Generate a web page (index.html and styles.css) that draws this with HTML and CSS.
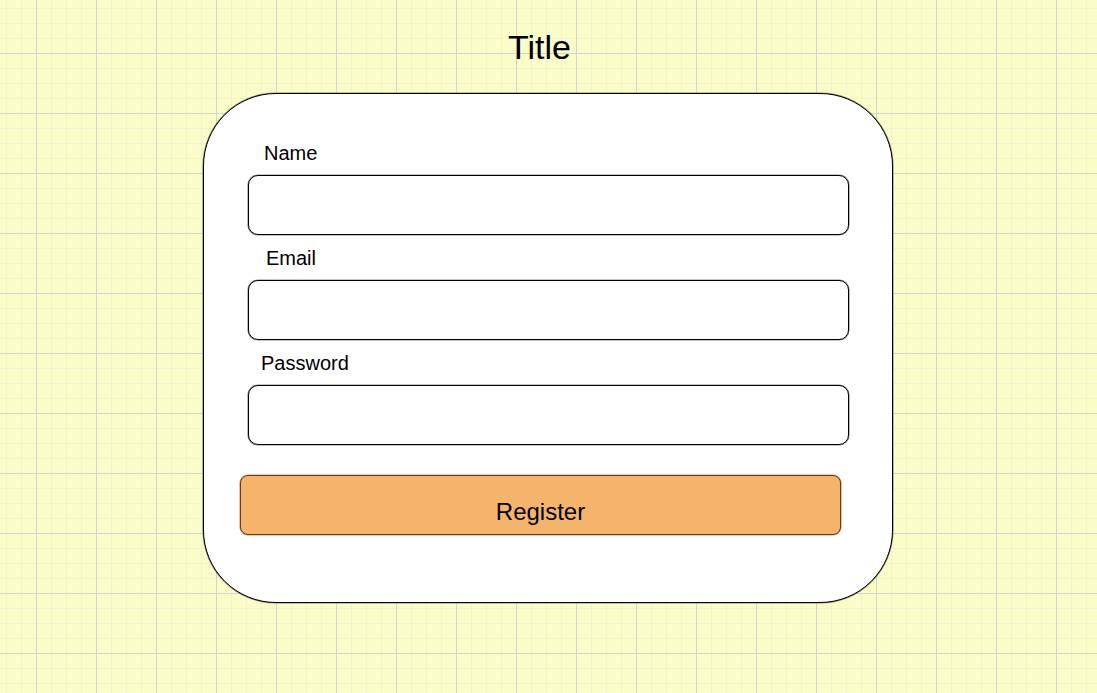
FILE: index.html
```html
<!DOCTYPE html>
<html lang="en">
<head>
<meta charset="utf-8">
<title>Register</title>
<link rel="stylesheet" href="styles.css">
</head>
<body>
<main class="page">
  <h1 class="title">Title</h1>
  <form class="card">
    <div class="field">
      <label class="label label-name" for="name">Name</label>
      <input class="input" id="name" type="text">
    </div>
    <div class="field">
      <label class="label label-email" for="email">Email</label>
      <input class="input" id="email" type="email">
    </div>
    <div class="field">
      <label class="label label-password" for="password">Password</label>
      <input class="input" id="password" type="password">
    </div>
    <button class="register" type="button">Register</button>
  </form>
</main>
</body>
</html>
```

FILE: styles.css
```css
html, body {
  margin: 0;
  padding: 0;
}

body {
  width: 1097px;
  height: 693px;
  overflow: hidden;
  font-family: "Liberation Sans", Arial, sans-serif;
  color: #000;
  background-color: #fbfdc9;
  background-image:
    linear-gradient(to right, #d5d5cf 1px, transparent 1px),
    linear-gradient(to bottom, #d5d5cf 1px, transparent 1px),
    linear-gradient(to right, #f2f3cd 1px, transparent 1px),
    linear-gradient(to bottom, #f2f3cd 1px, transparent 1px);
  background-size: 60px 60px, 60px 60px, 15px 15px, 15px 15px;
  background-position: 36px 53px, 36px 53px, 6px 8px, 6px 8px;
}

.page {
  display: flex;
  flex-direction: column;
  margin-left: 203px;
  width: 690px;
  padding-top: 27px;
}

.title {
  margin: 0 0 26px 0;
  padding-right: 17px;
  font-size: 34px;
  line-height: 40px;
  font-weight: normal;
  text-align: center;
}

.card {
  box-sizing: border-box;
  width: 690px;
  height: 510px;
  margin: 0;
  padding: 47px 0 0 36px;
  background: #ffffff;
  border: 1px solid #000;
  box-shadow: 0 0 0 0.6px rgba(0, 0, 0, 0.45);
  border-radius: 73px;
  display: flex;
  flex-direction: column;
  gap: 11px;
}

.field {
  display: flex;
  flex-direction: column;
  gap: 10px;
  margin-left: 8px;
}

.label {
  display: block;
  font-size: 20px;
  line-height: 24px;
}

.label-name { padding-left: 16px; }
.label-email { padding-left: 18px; }
.label-password { padding-left: 13px; }

.input {
  -webkit-appearance: none;
  appearance: none;
  box-sizing: border-box;
  display: block;
  width: 601px;
  height: 60px;
  margin: 0;
  padding: 0 12px;
  background: #ffffff;
  border: 1px solid #000;
  box-shadow: 0 0 0 0.6px rgba(0, 0, 0, 0.45);
  border-radius: 10px;
  font: inherit;
  outline: none;
}

.register {
  -webkit-appearance: none;
  appearance: none;
  box-sizing: border-box;
  width: 601px;
  height: 60px;
  margin: 19px 0 0 0;
  padding: 24px 0 0 0;
  display: flex;
  justify-content: center;
  align-items: flex-start;
  background: #f4b46c;
  border: 1px solid #7a3410;
  box-shadow: 0 0 0 0.6px rgba(122, 52, 16, 0.5);
  border-radius: 8px;
  font-family: "Liberation Sans", Arial, sans-serif;
  font-size: 24px;
  line-height: 24px;
  color: #000;
}
```
